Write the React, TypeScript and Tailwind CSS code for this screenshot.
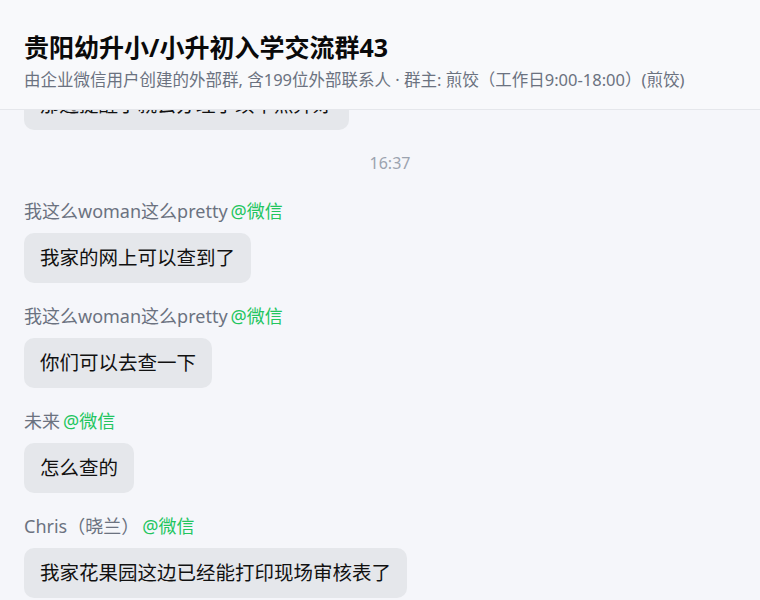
const FONT = { fontFamily: '"Noto Sans", "Noto Sans CJK SC", sans-serif' }

type Msg = { name: string; text: string }

const messages: Msg[] = [
  { name: '我这么woman这么pretty', text: '我家的网上可以查到了' },
  { name: '我这么woman这么pretty', text: '你们可以去查一下' },
  { name: '未来', text: '怎么查的' },
  { name: 'Chris（晓兰）', text: '我家花果园这边已经能打印现场审核表了' },
]

function Bubble({ children }: { children: React.ReactNode }) {
  return (
    <div className="inline-block rounded-[10px] bg-[#e5e7eb] px-4 py-[11px] text-[19.5px] leading-[28px] text-[#111]">
      {children}
    </div>
  )
}

function MessageItem({ msg }: { msg: Msg }) {
  return (
    <div className="mt-[21px]">
      <div className="text-[18px] leading-6 text-[#6b7280]">
        {msg.name}
        <span className="ml-[3px] text-[#22c55e]">@微信</span>
      </div>
      <div className="mt-[10px]">
        <Bubble>{msg.text}</Bubble>
      </div>
    </div>
  )
}

export default function App() {
  return (
    <div className="h-[600px] w-[760px] overflow-hidden bg-[#f5f6fa]" style={FONT}>
      <header className="relative z-10 h-[110px] border-b border-[#e5e7eb] bg-[#f8f9fb] px-6 pt-[31px]">
        <h1 className="text-[25px] font-bold leading-8 text-[#0a0a0a]">贵阳幼升小/小升初入学交流群43</h1>
        <p className="mt-[5px] text-[16.5px] leading-6 text-[#6b7280]">
          由企业微信用户创建的外部群, 含199位外部联系人 · 群主: 煎饺（工作日9:00-18:00）(煎饺)
        </p>
      </header>

      <div className="-mt-[30px] px-6">
        <Bubble>那边提醒了就去办理手续早点弄好</Bubble>

        <div className="mt-[21px] flex justify-center pl-5 text-[16px] leading-6 text-[#9ca3af]">16:37</div>

        <div className="mt-[3px] flex flex-col">
          {messages.map((m, i) => (
            <MessageItem key={i} msg={m} />
          ))}
        </div>
      </div>
    </div>
  )
}
